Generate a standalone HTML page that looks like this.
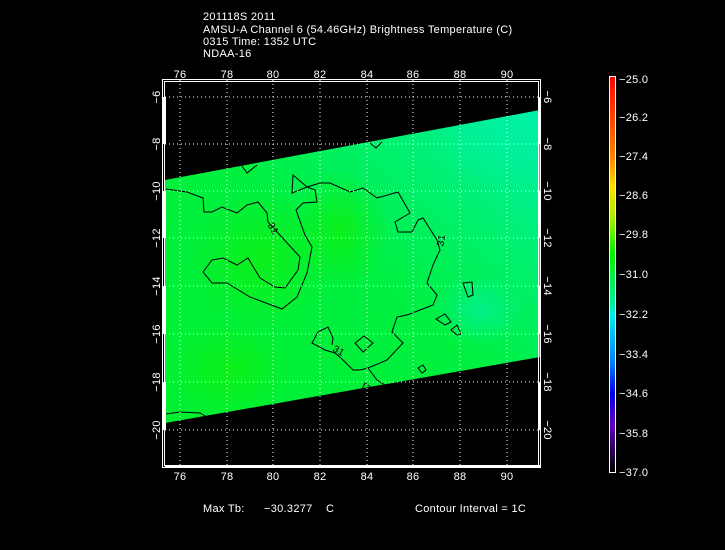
<!DOCTYPE html>
<html><head><meta charset="utf-8"><style>
html,body{margin:0;padding:0;background:#000;}
svg{display:block}
text{font-family:"Liberation Sans",sans-serif;fill:#fff;font-size:11px;letter-spacing:0.3px}
</style></head><body>
<svg width="725" height="550" viewBox="0 0 725 550">
<defs>
<linearGradient id="sw" x1="0" y1="1" x2="1" y2="0">
<stop offset="0" stop-color="#00f030"/>
<stop offset="0.5" stop-color="#00f040"/>
<stop offset="0.75" stop-color="#00f070"/>
<stop offset="1" stop-color="#00f0b0"/>
</linearGradient>
<radialGradient id="g1"><stop offset="0" stop-color="#10f010" stop-opacity="0.8"/><stop offset="1" stop-color="#10f010" stop-opacity="0"/></radialGradient>
<radialGradient id="g2"><stop offset="0" stop-color="#00f0a0" stop-opacity="0.7"/><stop offset="1" stop-color="#00f0a0" stop-opacity="0"/></radialGradient>
<linearGradient id="cb" x1="0" y1="0" x2="0" y2="1">
<stop offset="0" stop-color="#ff0000"/>
<stop offset="0.2" stop-color="#ff8000"/>
<stop offset="0.28" stop-color="#ffe000"/>
<stop offset="0.36" stop-color="#a0f000"/>
<stop offset="0.45" stop-color="#00f000"/>
<stop offset="0.58" stop-color="#00f0a0"/>
<stop offset="0.6" stop-color="#00f0f0"/>
<stop offset="0.72" stop-color="#0080ff"/>
<stop offset="0.8" stop-color="#0000f0"/>
<stop offset="0.88" stop-color="#6000c0"/>
<stop offset="1" stop-color="#000000"/>
</linearGradient>
<clipPath id="cp"><polygon points="165,180 540,110 540,357 165,423"/></clipPath>
</defs>
<text x="203" y="20">201118S 2011</text>
<text x="203" y="33">AMSU-A Channel 6 (54.46GHz) Brightness Temperature (C)</text>
<text x="203" y="45">0315 Time: 1352 UTC</text>
<text x="203" y="57">NDAA-16</text>

<polygon points="165,180 540,110 540,357 165,423" fill="url(#sw)"/>
<g clip-path="url(#cp)">
<ellipse cx="260" cy="260" rx="70" ry="70" fill="url(#g1)"/>
<ellipse cx="230" cy="370" rx="60" ry="50" fill="url(#g1)"/>
<ellipse cx="340" cy="230" rx="50" ry="60" fill="url(#g1)"/>
<ellipse cx="510" cy="140" rx="70" ry="50" fill="url(#g2)"/>
<ellipse cx="480" cy="310" rx="45" ry="35" fill="url(#g2)"/>
</g>
<g fill="none" stroke="#000" stroke-width="1">
<polyline points="166,189 187,192 203,198 204,212 212,212 222,207 237,213 247,205 258,202 267,213 268,222 278,233 300,257 298,270 285,288 275,287 260,278 248,258 237,265 223,258 212,260 203,272 212,283 227,283 250,297 282,309 297,297 307,273 312,247 305,235 296,210 303,203 317,202 315,190 307,187 293,175 292,193 307,187 320,183 330,183 350,192 363,188 377,198 398,192 410,213 395,222 398,232 412,232 418,220 423,218 437,240 440,250 433,265 427,283 437,295 433,305 407,315 397,317 392,332 403,343 387,360 368,368 377,380 388,387"/>
<polyline points="368,368 360,370 353,370 343,360 335,353 325,350 312,343 318,332 328,327 333,338 332,345"/>
<polyline points="360,393 365,383 372,388"/>
<polygon points="355,343 364,336 373,343 363,352"/>
<polygon points="436,319 445,314 451,322 445,325"/>
<polygon points="463,283 472,282 473,295 468,297"/>
<polygon points="451,330 457,325 461,334 457,335"/>
<polygon points="418,368 423,365 426,370 422,373"/>
<polyline points="242,166 247,173 257,165"/>
<polyline points="370,143 376,148 382,142"/>
<polyline points="166,414 180,412 200,413 207,417"/>
</g>
<g font-size="10">
<text x="268" y="230" style="fill:#000;font-size:10px" transform="rotate(60 272 227)">31</text>
<text x="436" y="246" style="fill:#000;font-size:10px" transform="rotate(-80 440 242)">31</text>
<text x="333" y="353" style="fill:#000;font-size:10px" transform="rotate(30 337 350)">31</text>
</g>

<g stroke="#fff" stroke-width="1" stroke-dasharray="1,3" fill="none">
<path d="M180,80V468M227,80V468M273,80V468M320,80V468M367,80V468M413,80V468M460,80V468M507,80V468"/>
<path d="M165,97H540M165,144H540M165,191H540M165,238H540M165,286H540M165,334H540M165,382H540M165,430H540"/>
</g>
<rect x="162.5" y="79.5" width="378" height="388" fill="none" stroke="#fff"/>
<rect x="164.5" y="81.5" width="374" height="384" fill="none" stroke="#fff"/>
<g fill="#fff">
<rect x="163" y="97" width="3" height="47"/><rect x="163" y="191" width="3" height="47"/><rect x="163" y="286" width="3" height="48"/><rect x="163" y="382" width="3" height="48"/>
<rect x="538" y="97" width="3" height="47"/><rect x="538" y="191" width="3" height="47"/><rect x="538" y="286" width="3" height="48"/><rect x="538" y="382" width="3" height="48"/>
<rect x="180" y="465" width="47" height="3"/><rect x="273" y="465" width="47" height="3"/><rect x="367" y="465" width="46" height="3"/><rect x="460" y="465" width="47" height="3"/>
<rect x="165" y="465" width="375" height="2"/>
</g>
<g text-anchor="middle">
<text x="180" y="78">76</text><text x="227" y="78">78</text><text x="273" y="78">80</text><text x="320" y="78">82</text><text x="367" y="78">84</text><text x="413" y="78">86</text><text x="460" y="78">88</text><text x="507" y="78">90</text>
<text x="180" y="480">76</text><text x="227" y="480">78</text><text x="273" y="480">80</text><text x="320" y="480">82</text><text x="367" y="480">84</text><text x="413" y="480">86</text><text x="460" y="480">88</text><text x="507" y="480">90</text>
<text transform="translate(160,97) rotate(-90)">−6</text>
<text transform="translate(160,144) rotate(-90)">−8</text>
<text transform="translate(160,191) rotate(-90)">−10</text>
<text transform="translate(160,238) rotate(-90)">−12</text>
<text transform="translate(160,286) rotate(-90)">−14</text>
<text transform="translate(160,334) rotate(-90)">−16</text>
<text transform="translate(160,382) rotate(-90)">−18</text>
<text transform="translate(160,430) rotate(-90)">−20</text>
<text transform="translate(544,97) rotate(90)">−6</text>
<text transform="translate(544,144) rotate(90)">−8</text>
<text transform="translate(544,191) rotate(90)">−10</text>
<text transform="translate(544,238) rotate(90)">−12</text>
<text transform="translate(544,286) rotate(90)">−14</text>
<text transform="translate(544,334) rotate(90)">−16</text>
<text transform="translate(544,382) rotate(90)">−18</text>
<text transform="translate(544,430) rotate(90)">−20</text>
</g>
<rect x="609.5" y="76.5" width="6" height="396" fill="url(#cb)" stroke="#fff"/>
<g>
<text x="619" y="83">−25.0</text><text x="619" y="121">−26.2</text><text x="619" y="160">−27.4</text><text x="619" y="199">−28.6</text><text x="619" y="238">−29.8</text><text x="619" y="278">−31.0</text><text x="619" y="318">−32.2</text><text x="619" y="358">−33.4</text><text x="619" y="397">−34.6</text><text x="619" y="437">−35.8</text><text x="619" y="476">−37.0</text>
</g>
<text x="203" y="512">Max Tb:</text>
<text x="264" y="512">−30.3277</text>
<text x="326" y="512">C</text>
<text x="415" y="512">Contour Interval = 1C</text>
</svg>
</body></html>
